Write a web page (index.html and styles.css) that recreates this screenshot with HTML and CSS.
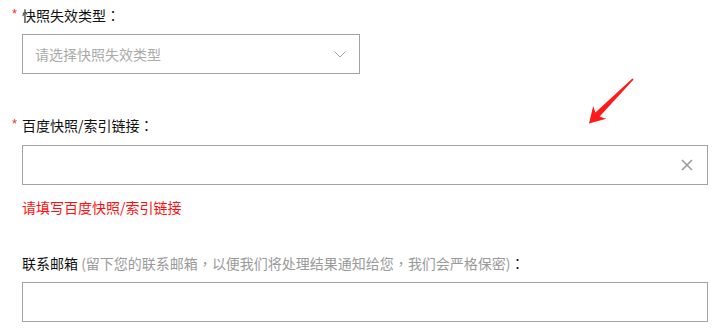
FILE: index.html
```html
<!DOCTYPE html>
<html lang="zh-CN">
<head>
<meta charset="utf-8">
<title>快照</title>
<link rel="stylesheet" href="styles.css">
</head>
<body>
<form class="form">
  <div class="field field-first">
    <div class="label"><span class="star">*</span>快照失效类型<span class="colon" lang="zh-TW">：</span></div>
    <div class="select">
      <span class="placeholder">请选择快照失效类型</span>
      <svg class="chevron" width="12" height="7" viewBox="0 0 12 7"><path d="M0.5 0.5 L6 6 L11.5 0.5" fill="none" stroke="#a3a3a3" stroke-width="1"/></svg>
    </div>
  </div>
  <div class="field field-second">
    <div class="label"><span class="star">*</span>百度快照/索引链接<span class="colon" lang="zh-TW">：</span></div>
    <div class="input input-clear">
      <svg class="clear" width="12" height="12" viewBox="0 0 12 12"><path d="M1 1 L11 11 M11 1 L1 11" fill="none" stroke="#9c9c9c" stroke-width="1.6"/></svg>
    </div>
    <div class="error">请填写百度快照/索引链接</div>
  </div>
  <div class="field field-third">
    <div class="label label-plain">联系邮箱<span class="hint"> (留下您的联系邮箱<span class="colon" lang="zh-TW">，</span>以便我们将处理结果通知给您<span class="colon" lang="zh-TW">，</span>我们会严格保密)</span><span class="colon" lang="zh-TW">：</span></div>
    <div class="input"></div>
  </div>
</form>
<svg class="arrow" width="54" height="54" viewBox="584 74 54 54">
  <polygon points="633.6,79.6 599.6,116.6 606.2,118.8 589,123.5 593.2,106 595.4,112.4 632.4,78.4" fill="#ff1a1a"/>
</svg>
</body>
</html>
```
FILE: styles.css
```css
html, body {
  margin: 0;
  padding: 0;
  background: #ffffff;
}
body {
  position: relative;
  width: 717px;
  height: 330px;
  overflow: hidden;
  font-family: "Noto Sans CJK SC", "Liberation Sans", sans-serif;
  font-size: 14px;
  color: #222;
}
.form {
  padding: 5px 0 0 12px;
}
.label {
  height: 20px;
  line-height: 20px;
  white-space: nowrap;
  color: #111111;
}
.label-plain {
  padding-left: 10px;
}
.colon {
  font-family: "Noto Sans CJK TC", "Noto Sans CJK SC", sans-serif;
}
.star {
  display: inline-block;
  width: 10px;
  color: #f2311f;
  font-family: "Liberation Sans", sans-serif;
  font-size: 13px;
  vertical-align: top;
  line-height: 18px;
}
.hint {
  color: #9a9a9a;
}
.select {
  margin: 9px 0 0 10px;
  width: 338px;
  height: 40px;
  box-sizing: border-box;
  border: 1px solid #a2a2a2;
  display: flex;
  align-items: center;
  justify-content: space-between;
  padding: 0 13px 0 12px;
}
.placeholder {
  color: #aaaaaa;
}
.chevron {
  display: block;
  margin-top: 1px;
}
.input {
  margin: 9px 0 0 10px;
  width: 686px;
  height: 40px;
  box-sizing: border-box;
  border: 1px solid #a2a2a2;
  display: flex;
  align-items: center;
  justify-content: flex-end;
  padding-right: 14px;
}
.field-second {
  margin-top: 41px;
}
.field-second .input {
  margin-top: 10px;
}
.clear {
  display: block;
}
.error {
  margin: 12px 0 0 10px;
  height: 20px;
  line-height: 20px;
  color: #ff1010;
}
.field-third {
  margin-top: 36px;
}
.arrow {
  position: absolute;
  left: 584px;
  top: 74px;
}
```
